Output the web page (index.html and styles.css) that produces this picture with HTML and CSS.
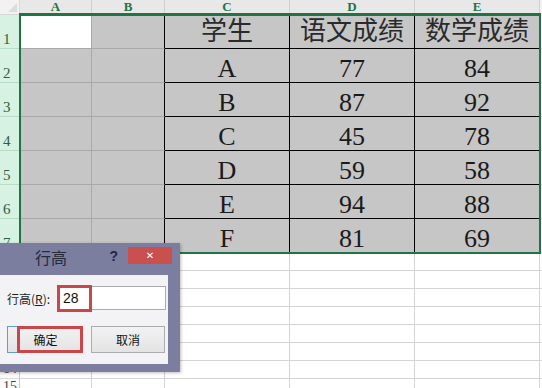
FILE: index.html
```html
<!DOCTYPE html>
<html lang="zh-CN">
<head>
    <meta charset="UTF-8">
    <title>行高</title>
    <link rel="stylesheet" href="styles.css">
</head>
<body>
    <div class="sheet">
        <div class="corner"></div>
        <div class="colhead">A</div>
        <div class="colhead">B</div>
        <div class="colhead">C</div>
        <div class="colhead">D</div>
        <div class="colhead">E</div>
        <div class="colhead rest"></div>

        <div class="rowhead sel">1</div>
        <div class="cell active"></div>
        <div class="cell sel edge"></div>
        <div class="cell data heading">学生</div>
        <div class="cell data heading">语文成绩</div>
        <div class="cell data heading">数学成绩</div>
        <div class="cell rest"></div>

        <div class="rowhead sel">2</div>
        <div class="cell sel"></div>
        <div class="cell sel edge"></div>
        <div class="cell data">A</div>
        <div class="cell data">77</div>
        <div class="cell data">84</div>
        <div class="cell rest"></div>

        <div class="rowhead sel">3</div>
        <div class="cell sel"></div>
        <div class="cell sel edge"></div>
        <div class="cell data">B</div>
        <div class="cell data">87</div>
        <div class="cell data">92</div>
        <div class="cell rest"></div>

        <div class="rowhead sel">4</div>
        <div class="cell sel"></div>
        <div class="cell sel edge"></div>
        <div class="cell data">C</div>
        <div class="cell data">45</div>
        <div class="cell data">78</div>
        <div class="cell rest"></div>

        <div class="rowhead sel">5</div>
        <div class="cell sel"></div>
        <div class="cell sel edge"></div>
        <div class="cell data">D</div>
        <div class="cell data">59</div>
        <div class="cell data">58</div>
        <div class="cell rest"></div>

        <div class="rowhead sel">6</div>
        <div class="cell sel"></div>
        <div class="cell sel edge"></div>
        <div class="cell data">E</div>
        <div class="cell data">94</div>
        <div class="cell data">88</div>
        <div class="cell rest"></div>

        <div class="rowhead sel">7</div>
        <div class="cell sel"></div>
        <div class="cell sel edge"></div>
        <div class="cell data">F</div>
        <div class="cell data">81</div>
        <div class="cell data">69</div>
        <div class="cell rest"></div>

        <div class="rowhead">8</div><div class="cell"></div><div class="cell"></div><div class="cell"></div><div class="cell"></div><div class="cell"></div><div class="cell rest"></div>
        <div class="rowhead">9</div><div class="cell"></div><div class="cell"></div><div class="cell"></div><div class="cell"></div><div class="cell"></div><div class="cell rest"></div>
        <div class="rowhead">10</div><div class="cell"></div><div class="cell"></div><div class="cell"></div><div class="cell"></div><div class="cell"></div><div class="cell rest"></div>
        <div class="rowhead">11</div><div class="cell"></div><div class="cell"></div><div class="cell"></div><div class="cell"></div><div class="cell"></div><div class="cell rest"></div>
        <div class="rowhead">12</div><div class="cell"></div><div class="cell"></div><div class="cell"></div><div class="cell"></div><div class="cell"></div><div class="cell rest"></div>
        <div class="rowhead">13</div><div class="cell"></div><div class="cell"></div><div class="cell"></div><div class="cell"></div><div class="cell"></div><div class="cell rest"></div>
        <div class="rowhead">14</div><div class="cell"></div><div class="cell"></div><div class="cell"></div><div class="cell"></div><div class="cell"></div><div class="cell rest"></div>
        <div class="rowhead">15</div><div class="cell"></div><div class="cell"></div><div class="cell"></div><div class="cell"></div><div class="cell"></div><div class="cell rest"></div>

        <!-- selection outline A1:E7 -->
        <div class="selection"></div>
    </div>

    <div class="dialog">
        <div class="titlebar">
            <span class="dlg-title">行高</span>
            <span class="help">?</span>
            <span class="close">&#x2715;</span>
        </div>
        <div class="client">
            <div class="field">
                <label>行高(<u>R</u>):</label>
                <div class="input">28<span class="mark"></span></div>
            </div>
            <div class="actions">
                <button class="ok">确定<span class="mark"></span></button>
                <button>取消</button>
            </div>
        </div>
    </div>
</body>
</html>
```

FILE: styles.css
```css
body {
    margin: 0;
    width: 542px;
    height: 388px;
    overflow: hidden;
    background: #fff;
    position: relative;
}

.sheet {
    display: grid;
    grid-template-columns: 20px 72px 73px 125px 125px 125px 2px;
    grid-template-rows: 15px repeat(7, 34px) repeat(8, 18px);
    position: relative;
}

.corner {
    background: #f2f2f2;
    border-right: 1px solid #d8d8d8;
    border-bottom: 1px solid #d8d8d8;
    position: relative;
}

.corner::after {
    content: "";
    position: absolute;
    right: 2px;
    bottom: 2px;
    border-left: 9px solid transparent;
    border-bottom: 9px solid #dcdcdc;
}

.colhead {
    background: #e8e8e8;
    border-right: 1px solid #d0d0d0;
    color: #217346;
    font-family: "Liberation Serif", serif;
    font-weight: bold;
    font-size: 13px;
    line-height: 14px;
    text-align: center;
}

.colhead.rest {
    background: #f2f2f2;
    border-right: none;
}

.rowhead {
    background: #fafafa;
    border-right: 1px solid #c8c8c8;
    border-bottom: 1px solid #dcdcdc;
    color: #444;
    font-family: "Liberation Serif", serif;
    font-size: 14px;
    display: flex;
    align-items: flex-end;
    padding-left: 3px;
    line-height: 16px;
    padding-bottom: 1px;
    box-sizing: border-box;
}

.rowhead.sel {
    background: #d7f2e2;
    color: #2f5e42;
    border-bottom-color: #b9dcc6;
    font-size: 15px;
}

.cell {
    border-right: 1px solid #d4d4d4;
    border-bottom: 1px solid #d4d4d4;
    box-sizing: border-box;
}

.cell.sel {
    background: #c6c6c6;
    border-color: #a9a9a9;
}

.cell.active {
    background: #fff;
    border-right: 1px solid #a9a9a9;
    border-bottom: 1px solid #a9a9a9;
}

.cell.edge {
    border-right-color: #000;
}

.cell.rest {
    border-right: none;
}

.cell.data {
    background-color: #c6c6c6;
    border-right: 1px solid #000;
    border-bottom: 1px solid #000;
    display: flex;
    align-items: flex-end;
    justify-content: center;
    white-space: nowrap;
    overflow: hidden;
    font-family: "Liberation Serif", "Noto Sans CJK SC", serif;
    font-size: 26px;
    line-height: 26px;
    color: #1a1a1a;
}

.cell.heading {
    font-size: 26px;
    padding-bottom: 3px;
    color: #2a2a2a;
}

.selection {
    position: absolute;
    left: 19px;
    top: 13px;
    width: 522px;
    height: 241px;
    border: 2px solid #217346;
    border-top-width: 3px;
    box-sizing: border-box;
    pointer-events: none;
}

/* row height dialog */
.dialog {
    position: absolute;
    left: -4px;
    top: 243px;
    width: 184px;
    height: 129px;
    background: #7b7e9e;
    box-sizing: border-box;
    font-family: "Noto Sans CJK SC", sans-serif;
    box-shadow: 1px 1px 3px rgba(0, 0, 0, 0.25);
}

.titlebar {
    display: flex;
    align-items: flex-start;
    height: 32px;
}

.dlg-title {
    margin-left: 39px;
    margin-top: 3px;
    font-size: 16px;
    line-height: 22px;
    color: #262a3c;
}

.help {
    margin-left: auto;
    margin-top: 5px;
    font-family: "Liberation Sans", sans-serif;
    font-weight: bold;
    font-size: 14px;
    line-height: 16px;
    color: #22264a;
}

.close {
    width: 44px;
    height: 17px;
    margin: 4px 8px 0 10px;
    background: #c9504f;
    color: #fff;
    font-family: "DejaVu Sans", sans-serif;
    font-size: 10px;
    font-weight: bold;
    line-height: 17px;
    text-align: center;
}

.client {
    margin: 0 12px 0 4px;
    height: 89px;
    background: #f3f3f6;
    padding: 11px 2px 0 7px;
    box-sizing: border-box;
}

.field {
    display: flex;
    align-items: center;
    gap: 4px;
}

.field label {
    font-size: 12px;
    color: #1c1c1c;
    width: 46px;
    white-space: nowrap;
}

.input {
    position: relative;
    width: 109px;
    height: 24px;
    border: 1px solid #ababab;
    background: #fff;
    box-sizing: border-box;
    font-family: "Liberation Sans", sans-serif;
    font-size: 14px;
    line-height: 22px;
    padding-left: 5px;
    color: #111;
}

.mark {
    position: absolute;
    border: 3px solid #c9464b;
    box-sizing: border-box;
}

.input .mark {
    left: -1px;
    top: -2px;
    width: 35px;
    height: 27px;
}

.actions {
    display: flex;
    gap: 9px;
    margin-top: 16px;
}

button {
    position: relative;
    width: 74px;
    height: 27px;
    padding: 0;
    border: 1px solid #acacac;
    border-radius: 0;
    background: linear-gradient(#f2f2f2, #e3e3e3);
    font-family: "Noto Sans CJK SC", sans-serif;
    font-size: 12px;
    color: #111;
}

button.ok {
    width: 75px;
    border-color: #5e9dd6;
    padding-left: 2px;
}

button.ok .mark {
    left: 9px;
    top: -1px;
    width: 66px;
    height: 27px;
}
```
